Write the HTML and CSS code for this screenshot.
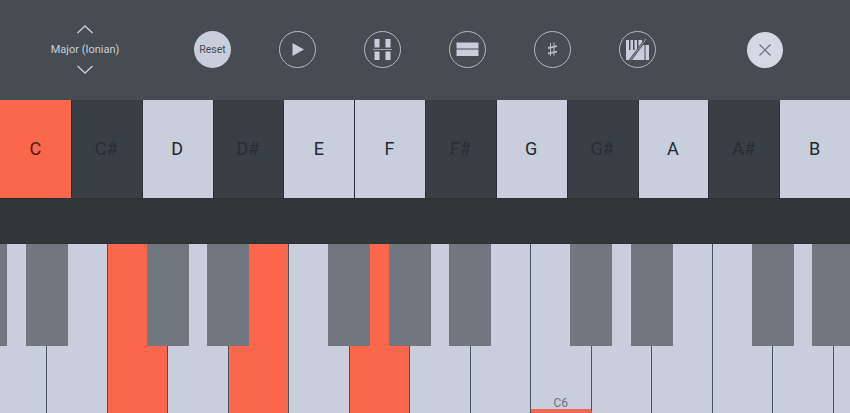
FILE: index.html
```html
<!DOCTYPE html>
<html lang="en">
<head>
    <meta charset="UTF-8">
    <title>Scale Picker</title>
    <link rel="stylesheet" href="styles.css">
</head>
<body>
    <div class="toolbar">
        <div class="scale-select">
            <svg class="chevron" width="18" height="9" viewBox="0 0 18 9"><path d="M1.5 8 9 1l7.5 7"/></svg>
            <span class="scale-name">Major (Ionian)</span>
            <svg class="chevron" width="18" height="9" viewBox="0 0 18 9"><path d="M1.5 1 9 8l7.5-7"/></svg>
        </div>

        <button class="round reset">Reset</button>

        <button class="round">
            <svg width="35" height="35" viewBox="0 0 35 35"><path class="fill" d="M12.500 11l11.500 6.500-11.500 6.500z"/></svg>
        </button>
        <button class="round">
            <svg width="35" height="35" viewBox="0 0 35 35">
                <rect class="fill" x="9.500" y="7" width="5" height="8.500"/>
                <rect class="fill" x="20.500" y="7" width="5" height="8.500"/>
                <rect class="fill" x="9.500" y="19.500" width="5" height="8.500"/>
                <rect class="fill" x="20.500" y="19.500" width="5" height="8.500"/>
                <rect class="faint" x="8" y="17" width="19" height="1"/>
            </svg>
        </button>
        <button class="round">
            <svg width="35" height="35" viewBox="0 0 35 35">
                <rect class="fill" x="6.500" y="10.500" width="22" height="6"/>
                <rect class="fill" x="6.500" y="17.500" width="22" height="6.500"/>
            </svg>
        </button>
        <button class="round">
            <svg width="35" height="35" viewBox="0 0 35 35">
                <path class="line" d="M15.500 11v13M19 10.500v13"/>
                <path class="line thick" d="M13 16l9-1.800M13 21.500l9-1.800"/>
            </svg>
        </button>
        <button class="round">
            <svg width="35" height="35" viewBox="0 0 35 35">
                <path class="fill" d="M6 8h16v5h7v15H6z"/>
                <path class="cut" d="M9 8v10h1.500V8zM13 8v10h1.500V8zM17 8v10h1.500V8z"/>
                <path class="cut-thin" d="M25 28V13"/>
                <path class="slash-edge" d="M10 28.500 26 7"/>
                <path class="slash" d="M10 28.500 26 7"/>
            </svg>
        </button>

        <button class="round close">
            <svg width="36" height="36" viewBox="0 0 36 36"><path d="M12.500 12.500l11 11M23.500 12.500l-11 11"/></svg>
        </button>
    </div>

    <div class="notes">
        <div class="note on">C</div>
        <div class="note sharp">C#</div>
        <div class="note">D</div>
        <div class="note sharp">D#</div>
        <div class="note">E</div>
        <div class="note">F</div>
        <div class="note sharp">F#</div>
        <div class="note">G</div>
        <div class="note sharp">G#</div>
        <div class="note">A</div>
        <div class="note sharp">A#</div>
        <div class="note">B</div>
    </div>

    <div class="spacer"></div>

    <div class="piano">
        <div class="white-keys">
            <div class="key"></div>
            <div class="key"></div>
            <div class="key on"></div>
            <div class="key"></div>
            <div class="key on"></div>
            <div class="key"></div>
            <div class="key on"></div>
            <div class="key"></div>
            <div class="key"></div>
            <div class="key middle"><span class="key-name">C6</span></div>
            <div class="key"></div>
            <div class="key"></div>
            <div class="key"></div>
            <div class="key"></div>
            <div class="key"></div>
        </div>
        <div class="black-keys">
            <div class="black"></div>
            <div class="black"></div>
            <div class="black skip"></div>
            <div class="black"></div>
            <div class="black skip"></div>
            <div class="black"></div>
            <div class="black"></div>
            <div class="black skip"></div>
            <div class="black"></div>
            <div class="black skip"></div>
            <div class="black"></div>
        </div>
    </div>
</body>
</html>
```

FILE: styles.css
```css
html, body {
    margin: 0;
    height: 413px;
    overflow: hidden;
}

body {
    font-family: Roboto, "Liberation Sans", sans-serif;
    background-color: #313739;
}

.toolbar {
    display: flex;
    align-items: center;
    box-sizing: border-box;
    height: 100px;
    padding: 0 0 1px 50px;
    background-color: #454c52;
}

.scale-select {
    display: flex;
    flex-direction: column;
    align-items: center;
    width: 70px;
    gap: 9px;
}

.chevron path {
    fill: none;
    stroke: #c8cedb;
    stroke-width: 1.3;
}

.scale-name {
    font-size: 11px;
    line-height: 13px;
    white-space: nowrap;
    color: #c8cedb;
}

.round {
    display: flex;
    align-items: center;
    justify-content: center;
    flex: none;
    width: 37px;
    height: 37px;
    margin-left: 48px;
    padding: 0;
    border: 1px solid #b4b9c1;
    border-radius: 50%;
    background: none;
    font-family: inherit;
}

.scale-select + .round {
    margin-left: 74px;
}

.reset {
    border: none;
    background-color: #c8cedb;
    color: #454c52;
    font-size: 10.5px;
}

.close {
    width: 36px;
    height: 36px;
    margin-left: 91px;
    border: none;
    background-color: #d3d8e2;
}

.close path {
    fill: none;
    stroke: #666d76;
    stroke-width: 1.2;
}

.fill {
    fill: #c8cedb;
}

.faint {
    fill: #9da3ad;
}

.line {
    fill: none;
    stroke: #b4b9c3;
    stroke-width: 1;
}

.thick {
    stroke-width: 1.8;
}

.cut {
    fill: #454c52;
}

.cut-thin {
    fill: none;
    stroke: #454c52;
    stroke-width: 1;
}

.slash-edge {
    fill: none;
    stroke: #454c52;
    stroke-width: 2.6;
}

.slash {
    fill: none;
    stroke: #8c9199;
    stroke-width: 1.2;
}

.notes {
    display: grid;
    grid-template-columns: repeat(12, 1fr);
    height: 99px;
}

.note {
    display: flex;
    align-items: center;
    justify-content: center;
    padding-bottom: 2px;
    background-color: #c8cedb;
    box-shadow: inset 1px 0 0 #2b3036, inset 0 -1px 0 #2b3036;
    color: #22282f;
    font-size: 18px;
}

.note.on {
    background-color: #fa674a;
    box-shadow: inset 0 -1px 0 #2b3036;
    color: #4f1a10;
}

.note.sharp {
    background-color: #383f45;
    color: #282e34;
}

.spacer {
    height: 44px;
    background-color: #313739;
}

.piano {
    position: relative;
    height: 170px;
    overflow: hidden;
    border-top: 1px solid #2b3036;
    box-sizing: border-box;
}

.white-keys {
    display: flex;
    height: 100%;
    margin-left: -13.5px;
}

.key {
    display: flex;
    flex-direction: column;
    justify-content: flex-end;
    align-items: center;
    flex: none;
    box-sizing: border-box;
    width: 60.5px;
    border-right: 1px solid #4a525d;
    background-color: #c8cedb;
}

.key.on {
    background-color: #fa674a;
}

.middle {
    border-bottom: 4px solid #ee6a52;
}

.key-name {
    font-size: 12px;
    line-height: 11px;
    color: #6b727c;
}

/* sits on top of the white keys, so it needs to be out of the flow */
.black-keys {
    position: absolute;
    top: 0;
    left: -35px;
    display: flex;
    gap: 18.5px;
}

.black {
    flex: none;
    width: 42px;
    height: 102px;
    background-color: #70777f;
}

.skip {
    margin-left: 60.5px;
}
```
